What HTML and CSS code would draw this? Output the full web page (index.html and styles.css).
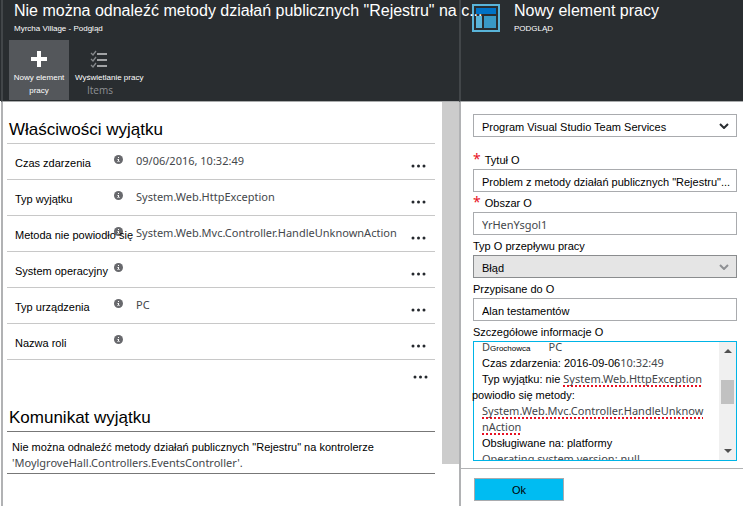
FILE: index.html
```html
<!DOCTYPE html>
<html lang="pl">
<head>
<meta charset="utf-8">
<title>Nowy element pracy</title>
<link rel="stylesheet" href="styles.css">
</head>
<body>
<svg class="defs" aria-hidden="true">
  <symbol id="info" viewBox="0 0 9 9"><circle cx="4.500" cy="4.500" r="4.500" fill="#68696d"/><path d="M4 2h1v1H4zM4 4h1v3H4z" fill="#fff"/><path d="M3 4h1v1H3zM3 6h3v1H3z" fill="#b9babc"/></symbol>
  <symbol id="dots" viewBox="0 0 16 4"><circle cx="2" cy="2" r="1.500"/><circle cx="7.500" cy="2" r="1.500"/><circle cx="13" cy="2" r="1.500"/></symbol>
</svg>
<main class="blades">
  <section class="blade details">
    <header class="head">
      <h1 class="title">Nie można odnaleźć metody działań publicznych "Rejestru" na c...</h1>
      <p class="subtitle">Myrcha Village - Podgląd</p>
      <div class="commands">
        <button class="command active" type="button">
          <svg class="command-icon" viewBox="0 0 20 20"><path d="M10 2v16M2 10h16" stroke="#fff" stroke-width="4"/></svg>
          <span class="caption">Nowy element<br>pracy</span>
        </button>
        <button class="command wide" type="button">
          <svg class="command-icon" viewBox="0 0 20 20"><path d="M8 5h10M8 11h10M8 17h10" stroke="#a1a3a5" stroke-width="2"/><path d="M2 4l2 2 3-4M2 10l2 2 3-4M2 16l2 2 3-4" stroke="#85888b" stroke-width="1.300" fill="none"/></svg>
          <span class="caption">Wyświetlanie pracy<br><span class="dim">Items</span></span>
        </button>
      </div>
    </header>
    <div class="body">
      <div class="content">
        <h2 class="section">Właściwości wyjątku</h2>
        <dl class="props">
          <div class="row"><dt>Czas zdarzenia</dt><dd><svg class="info"><use href="#info"/></svg><span class="value">09/06/2016, 10:32:49</span><button class="more" type="button" aria-label="Więcej"><svg><use href="#dots"/></svg></button></dd></div>
          <div class="row"><dt>Typ wyjątku</dt><dd><svg class="info"><use href="#info"/></svg><span class="value">System.Web.HttpException</span><button class="more" type="button" aria-label="Więcej"><svg><use href="#dots"/></svg></button></dd></div>
          <div class="row"><dt>Metoda nie powiodło się</dt><dd><svg class="info"><use href="#info"/></svg><span class="value">System.Web.Mvc.Controller.HandleUnknownAction</span><button class="more" type="button" aria-label="Więcej"><svg><use href="#dots"/></svg></button></dd></div>
          <div class="row"><dt>System operacyjny</dt><dd><svg class="info"><use href="#info"/></svg><span class="value"></span><button class="more" type="button" aria-label="Więcej"><svg><use href="#dots"/></svg></button></dd></div>
          <div class="row"><dt>Typ urządzenia</dt><dd><svg class="info"><use href="#info"/></svg><span class="value">PC</span><button class="more" type="button" aria-label="Więcej"><svg><use href="#dots"/></svg></button></dd></div>
          <div class="row"><dt>Nazwa roli</dt><dd><svg class="info"><use href="#info"/></svg><span class="value"></span><button class="more" type="button" aria-label="Więcej"><svg><use href="#dots"/></svg></button></dd></div>
        </dl>
        <button class="more all" type="button" aria-label="Więcej właściwości"><svg><use href="#dots"/></svg></button>
        <h2 class="section">Komunikat wyjątku</h2>
        <p class="message">Nie można odnaleźć metody działań publicznych "Rejestru" na kontrolerze<br><span class="code">'MoylgroveHall.Controllers.EventsController'.</span></p>
      </div>
      <div class="scroll"></div>
    </div>
  </section>

  <section class="blade editor">
    <header class="head with-icon">
      <svg class="blade-icon" viewBox="0 0 28 28"><path d="M1 1h26v26H1z" fill="#292d30" stroke="#59b4d9" stroke-width="2"/><path d="M4 4h20v6H4z" fill="#0072c6"/><path d="M4 12h6v12H4z" fill="#59b4d9"/><path d="M12 12h12v12H12z" fill="#3999c6"/></svg>
      <div>
        <h1 class="title">Nowy element pracy</h1>
        <p class="subtitle">PODGLĄD</p>
      </div>
    </header>
    <form class="form">
      <div class="pick">
        <select class="field" aria-label="Usługa"><option>Program Visual Studio Team Services</option></select>
        <svg class="chevron" viewBox="0 0 10 6"><path d="M1 1l4 4 4-4"/></svg>
      </div>
      <div class="fields">
        <label class="label required" for="title">Tytuł O</label>
        <input class="field" id="title" value="Problem z metody działań publicznych &quot;Rejestru&quot;...">
        <label class="label required" for="area">Obszar O</label>
        <input class="field code" id="area" value="YrHenYsgol1">
        <label class="label" for="type">Typ O przepływu pracy</label>
        <div class="pick">
          <select class="field" id="type" disabled><option>Błąd</option></select>
          <svg class="chevron" viewBox="0 0 10 6"><path d="M1 1l4 4 4-4"/></svg>
        </div>
        <label class="label" for="person">Przypisane do O</label>
        <input class="field" id="person" value="Alan testamentów">
        <span class="label" id="details-label">Szczegółowe informacje O</span>
        <div class="rich">
          <div class="rich-view">
            <div class="rich-text" role="textbox" aria-multiline="true" aria-labelledby="details-label" contenteditable="true" spellcheck="false">
              <div><span class="code">D</span><small>Grochowca</small><span class="code host">PC</span></div>
              <div>Czas zdarzenia: 2016-09-06<span class="code">10:32:49</span></div>
              <div>Typ wyjątku: nie <span class="code misspelt">System.Web.HttpException</span></div>
              <div class="outdent">powiodło się metody:</div>
              <div><span class="code misspelt">System.Web.Mvc.Controller.HandleUnknow<br>nAction</span></div>
              <div>Obsługiwane na: platformy</div>
              <div><span class="code">Operating system version: null</span></div>
            </div>
          </div>
          <div class="rich-scroll">
            <svg viewBox="0 0 8 4"><path d="M0 4l4-4 4 4z"/></svg>
            <span class="thumb"></span>
            <svg viewBox="0 0 8 4"><path d="M0 0l4 4 4-4z"/></svg>
          </div>
        </div>
      </div>
      <footer class="actions"><button class="ok" type="button">Ok</button></footer>
    </form>
  </section>
</main>
</body>
</html>
```
FILE: styles.css
```css
* { box-sizing: border-box; }
body {
  margin: 0;
  background: #fff;
  color: #000;
  font: 11px/16px "Liberation Sans", Arial, sans-serif;
}
h1, h2, p, dl, dd { margin: 0; font-weight: normal; }
button, input, select { font: inherit; color: inherit; }
button { padding: 0; border: 0; background: none; }
svg { display: block; }
.defs { display: none; }

.blades {
  display: grid;
  grid-template-columns: 458fr 284fr;
  min-height: 100vh;
  padding-left: 1px;
  background: linear-gradient(#292d30 101px, #fff 101px);
}
.blade { display: flex; flex-direction: column; min-width: 0; border-left: 2px solid #b1b2b4; }
.head {
  height: 102px;
  margin-left: -2px;
  padding-left: 11px;
  border-left: 2px solid #424649;
  border-bottom: 1px solid #a9abac;
  background: #292d30;
  color: #fff;
}
.title { font-size: 16px; line-height: 22px; white-space: nowrap; }
.details .title { position: relative; z-index: 1; }
.subtitle { font-size: 8px; line-height: 14px; }
.with-icon { display: flex; gap: 14px; }
.blade-icon { width: 28px; height: 28px; margin-top: 4px; }

.commands { display: flex; margin: 4px 0 0 -5px; }
.command { width: 60px; height: 60px; padding-top: 6px; font-size: 8px; line-height: 13px; white-space: nowrap; }
.active { background: #54575b; }
.wide { width: auto; padding-left: 6px; text-align: left; }
.command-icon { width: 20px; height: 20px; margin: 0 auto 2px; }
.wide .command-icon { margin-left: 14px; }
.caption { display: block; }
.dim { margin-left: 12px; color: #8e9194; font: 10px/12px "Open Sans", sans-serif; }

.body { display: flex; flex: 1; align-items: flex-start; }
.content { flex: 1; min-width: 0; padding: 0 7px 0 4px; }
.scroll { width: 17px; height: 362px; background: #ccc; }
.section { height: 41px; padding: 17px 0 0 2px; font-size: 17px; line-height: 22px; }
.props { border-top: 1px solid #c8c8c8; }
.row { display: grid; grid-template-columns: 98px 1fr; height: 36px; padding: 0 8px; border-bottom: 1px solid #c8c8c8; }
dt { position: relative; z-index: 1; padding-top: 11px; white-space: nowrap; }
dd { display: flex; min-width: 0; }
.info { width: 9px; height: 9px; margin: 11px 13px 0 1px; }
.value { flex: 1; padding-top: 9px; min-width: 0; white-space: nowrap; }
.value, .code { font-family: "Noto Sans", sans-serif; color: #44474b; }
.more svg { width: 16px; height: 4px; fill: #24282d; }
.row .more { padding-top: 9px; }
.all { display: block; margin: 15px 6px 11px auto; }
.message { padding: 7px 5px 2px; border-top: 1px solid #777; border-bottom: 1px solid #777; white-space: nowrap; }

.form { display: flex; flex: 1; flex-direction: column; padding-top: 12px; }
.form > .pick, .fields { margin: 0 6px 0 12px; }
.pick { display: grid; }
.pick > * { grid-area: 1 / 1; }
.chevron { width: 10px; height: 6px; margin: 9px 8px 0 0; justify-self: end; pointer-events: none; fill: none; stroke: #292d30; stroke-width: 2; }
.field {
  display: block;
  width: 100%;
  height: 23px;
  padding: 2px 4px 0 8px;
  border: 1px solid #a9abae;
  border-radius: 0;
  background: #fff;
  appearance: none;
  outline: 0;
}
.field:disabled { border-color: #8a8c8e; background: #e5e5e5; color: #000; opacity: 1; }
.field:disabled + .chevron { stroke: #8e9093; }
.fields { display: flex; flex-direction: column; margin-top: 12px; }
.label { height: 20px; padding-top: 3px; }
.required::before { content: "*"; margin-right: 4px; color: #e81123; font: 14px/12px "Noto Sans", sans-serif; }

.rich { display: flex; height: 120px; border: 1px solid #00b4e6; }
.rich-view { flex: 1; min-width: 0; height: 118px; clip-path: inset(0 0 0 -3px); }
.rich-text { margin-top: -3px; padding-left: 8px; outline: 0; white-space: nowrap; }
.rich-text > div { height: 16px; }
.rich-text > div:nth-child(5) { height: 32px; }
.rich small { font-size: 8px; }
.host { margin-left: 18px; }
.outdent { margin-left: -10px; }
.misspelt { text-decoration: underline dotted #e81123 2px; text-underline-offset: 2px; text-decoration-skip-ink: none; }
.rich-scroll { display: flex; flex-direction: column; align-items: center; width: 17px; padding: 7px 0; background: #f0f0f0; }
.rich-scroll svg { width: 8px; height: 4px; fill: #505050; }
.thumb { width: 13px; height: 24px; margin: 27px 0 auto; background: #c1c1c1; }

.actions { margin-top: 7px; padding: 9px 13px; border-top: 1px solid #b1b2b4; }
.ok { width: 90px; height: 23px; border: 1px solid #a9abae; background: #00bcf2; }
```
